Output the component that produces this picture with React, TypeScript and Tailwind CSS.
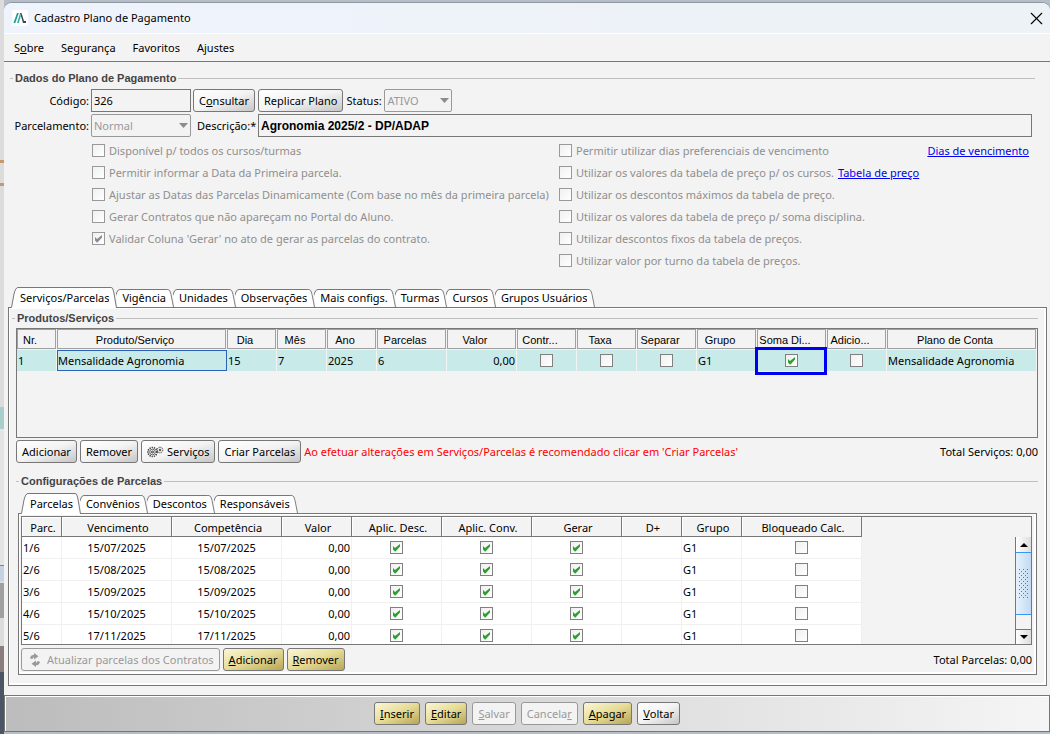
import React, { useState } from 'react';
import clsx from 'clsx';
import { X } from 'lucide-react';

interface Column {
  title: string;
  width: string;
}

const serviceColumns: Column[] = [
  { title: 'Nr.', width: 'w-[40px]' },
  { title: 'Produto/Serviço', width: 'w-[170px]' },
  { title: 'Dia', width: 'w-[50px]' },
  { title: 'Mês', width: 'w-[50px]' },
  { title: 'Ano', width: 'w-[50px]' },
  { title: 'Parcelas', width: 'w-[70px]' },
  { title: 'Valor', width: 'w-[70px]' },
  { title: 'Contr...', width: 'w-[60px]' },
  { title: 'Taxa', width: 'w-[60px]' },
  { title: 'Separar', width: 'w-[60px]' },
  { title: 'Grupo', width: 'w-[60px]' },
  { title: 'Soma Di...', width: 'w-[70px]' },
  { title: 'Adicio...', width: 'w-[60px]' },
  { title: 'Plano de Conta', width: 'w-auto' },
];

const parcelColumns: Column[] = [
  { title: 'Parc.', width: 'w-[40px]' },
  { title: 'Vencimento', width: 'w-[110px]' },
  { title: 'Competência', width: 'w-[110px]' },
  { title: 'Valor', width: 'w-[70px]' },
  { title: 'Aplic. Desc.', width: 'w-[90px]' },
  { title: 'Aplic. Conv.', width: 'w-[90px]' },
  { title: 'Gerar', width: 'w-[90px]' },
  { title: 'D+', width: 'w-[60px]' },
  { title: 'Grupo', width: 'w-[60px]' },
  { title: 'Bloqueado Calc.', width: 'w-[120px]' },
];

const parcels = [
  { nr: '1/6', date: '15/07/2025' },
  { nr: '2/6', date: '15/08/2025' },
  { nr: '3/6', date: '15/09/2025' },
  { nr: '4/6', date: '15/10/2025' },
  { nr: '5/6', date: '17/11/2025' },
];

const mainTabs = ['Serviços/Parcelas', 'Vigência', 'Unidades', 'Observações', 'Mais configs.', 'Turmas', 'Cursos', 'Grupos Usuários'];
const parcelTabs = ['Parcelas', 'Convênios', 'Descontos', 'Responsáveis'];

function Check({ checked = false, disabled = false, label, id }: { checked?: boolean; disabled?: boolean; label?: string; id?: string }) {
  return (
    <span className={clsx('grid size-[13px] shrink-0', !id && 'mx-auto')}>
      <input
        id={id}
        type="checkbox"
        aria-label={label}
        defaultChecked={checked}
        disabled={disabled}
        className="peer col-start-1 row-start-1 size-[13px] appearance-none border border-[#808080] bg-gradient-to-br from-[#f0f0f0] to-white disabled:border-[#999]"
      />
      <svg
        viewBox="0 0 13 13"
        className={clsx('pointer-events-none col-start-1 row-start-1 hidden size-[13px] peer-checked:block', disabled ? 'text-[#8c8c8c]' : 'text-[#2ca02c]')}
      >
        <path d="M3 5L5 7L10 3V5.5L5.5 10.5H4.8L3 8.5Z" fill="currentColor" />
      </svg>
    </span>
  );
}

function Option({ id, text, checked }: { id: string; text: string; checked?: boolean }) {
  return (
    <div className="flex h-[22px] items-center gap-1 pb-px text-[#8f8f8f]">
      <Check id={id} checked={checked} disabled />
      <label htmlFor={id} className="whitespace-nowrap">{text}</label>
    </div>
  );
}

function Button({ children, tone = 'gray', disabled }: { children: React.ReactNode; tone?: 'gray' | 'gold'; disabled?: boolean }) {
  return (
    <button
      type="button"
      disabled={disabled}
      className={clsx(
        'flex h-[23px] shrink-0 items-center justify-center whitespace-nowrap rounded-[3px] border px-[5px]',
        disabled && 'border-[#999] bg-[#f3f3f3] text-[#999]',
        !disabled && tone === 'gray' && 'border-[#777] bg-gradient-to-br from-white via-[#f3f3f3] to-[#c6c6c6]',
        !disabled && tone === 'gold' && 'border-[#777] bg-gradient-to-br from-[#fbf6d6] via-[#e6dc96] to-[#b8a557]'
      )}
    >
      {children}
    </button>
  );
}

function GroupTitle({ children }: { children: React.ReactNode }) {
  return (
    <div className="flex h-[14px] items-center gap-[2px]">
      <span className="h-px w-[3px] bg-[#c0c0c0]" />
      <h2 className="font-['Liberation_Sans',sans-serif] text-[11px] font-bold text-[#444]">{children}</h2>
      <span className="h-px flex-1 bg-[#c0c0c0]" />
    </div>
  );
}

function Tabs({ items }: { items: string[] }) {
  const [active, setActive] = useState(0);
  return (
    <div role="tablist" className="relative z-10 -mb-px flex h-[21px] items-end pl-[3px]">
      {items.map((item, i) => {
        const on = i === active;
        return (
          <button
            key={item}
            type="button"
            role="tab"
            aria-selected={on}
            onClick={() => setActive(i)}
            className={clsx('flex', on ? 'h-[21px]' : 'mb-px h-[18px]', i > 0 && '-ml-px')}
          >
            {i === 0 ? (
              <svg viewBox="0 0 9 21" className="h-[21px] w-[9px]">
                <path d="M0.5 20.5L3 7Q4.5 0.5 7 0.5H9V21H0.5Z" fill="#fff" />
                <path d="M0.5 20.5L3 7Q4.5 0.5 7 0.5H9" fill="none" stroke="#777" />
              </svg>
            ) : (
              <svg viewBox="0 0 6 18" className="h-[18px] w-[6px]">
                <path d="M0 6L1 3Q2 0.5 4 0.5H6V18H1.5Z" fill="#fff" />
                <path d="M-0.5 7L1 3Q2 0.5 4 0.5H6" fill="none" stroke="#777" />
              </svg>
            )}
            <span className="flex h-full items-center whitespace-nowrap border-t border-[#777] bg-white pb-px">{item}</span>
            <svg viewBox="0 0 8 20" preserveAspectRatio="none" className="h-full w-2">
              <path d="M0 0.5H2Q4 0.5 5 6L7.5 20H0Z" fill="#fff" />
              <path d="M0 0.5H2Q4 0.5 5 6L7.5 20" fill="none" stroke="#777" />
            </svg>
          </button>
        );
      })}
    </div>
  );
}

function Combo({ id, value, className }: { id: string; value: string; className: string }) {
  return (
    <span className={clsx('grid h-[23px] items-center', className)}>
      <select id={id} disabled defaultValue={value} className="col-start-1 row-start-1 h-full w-full appearance-none rounded-[2px] border border-[#999] px-[2px] text-[#999] opacity-100">
        <option>{value}</option>
      </select>
      <svg viewBox="0 0 9 5" className="pointer-events-none col-start-1 row-start-1 mr-[3px] h-[5px] w-[9px] justify-self-end">
        <path d="M0 0H9L4.5 5Z" fill="#8c8c8c" />
      </svg>
    </span>
  );
}

function Logo() {
  return (
    <svg viewBox="0 0 16 16" className="size-4 rounded-[2px] bg-white">
      <path d="M1.5 13L5 3H6.8L3.3 13Z" fill="#1a9c8c" />
      <path d="M5 13L8 3.5L8.8 6L6.8 13Z" fill="#2fae9e" />
      <path d="M8 3H9.5L12 11H14V13H11Z" fill="#3c4650" />
    </svg>
  );
}

function Gears() {
  return (
    <svg viewBox="0 0 17 12" className="mr-[3px] h-3 w-[17px]" fill="none" stroke="#333">
      <circle cx="5.5" cy="6" r="4.5" strokeWidth="1.6" strokeDasharray="1.2 1" />
      <circle cx="5.5" cy="6" r="2.8" stroke="#666" />
      <circle cx="5.5" cy="6" r="1" />
      <circle cx="13" cy="4" r="2.8" strokeDasharray="1.2 0.7" />
      <circle cx="13" cy="4" r="0.8" />
    </svg>
  );
}

function Refresh() {
  return (
    <svg viewBox="0 0 14 14" className="ml-px mr-[5px] size-[14px]" fill="#999">
      <path d="M2 4.5Q3 1.8 6 1.8V0L10.5 3.2L6 6.4V4.3Q5 4 4.5 6Q2 6 2 4.5Z" />
      <path d="M12 9.5Q11 12.2 8 12.2V14L3.5 10.8L8 7.6V9.7Q9 10 9.5 8Q12 8 12 9.5Z" />
    </svg>
  );
}

function ServicesTable() {
  return (
    <div className="h-[110px] border border-[#777]">
      <table className="w-full table-fixed border-separate border-spacing-0">
        <thead>
          <tr>
            {serviceColumns.map((col) => (
              <th key={col.title} className={clsx('h-[21px] p-0 pb-px pr-px font-normal', col.width)}>
                <div className="flex h-5 items-center justify-center overflow-hidden whitespace-nowrap border border-[#a0a0a0] pr-[13px] pt-[2px] font-['Liberation_Sans',sans-serif] text-[11px]">
                  {col.title}
                </div>
              </th>
            ))}
          </tr>
        </thead>
        <tbody>
          <tr className="h-[21px] bg-[#c8ebea] *:border-r *:border-[#f3f3f3] *:px-px *:py-0">
            <td>1</td>
            <td className="outline outline-1 -outline-offset-1 outline-[#2a62b8]">Mensalidade Agronomia</td>
            <td>15</td>
            <td>7</td>
            <td>2025</td>
            <td>6</td>
            <td className="text-right">0,00</td>
            <td><Check label="Contr..." /></td>
            <td><Check label="Taxa" /></td>
            <td><Check label="Separar" /></td>
            <td>G1</td>
            <td className="relative">
              <Check label="Soma Di..." checked />
              <span className="pointer-events-none absolute -bottom-1 -left-[2px] -right-px -top-[3px] border-3 border-[#0000f0]" />
            </td>
            <td><Check label="Adicio..." /></td>
            <td className="whitespace-nowrap">Mensalidade Agronomia</td>
          </tr>
        </tbody>
      </table>
    </div>
  );
}

function ScrollBar() {
  return (
    <div className="mt-5 flex w-4 flex-col border-l border-[#777]">
      <span className="flex h-[15px] items-center justify-center bg-gradient-to-r from-white to-[#ddd]">
        <svg viewBox="0 0 8 4" className="h-1 w-2"><path d="M0 4L4 0L8 4Z" /></svg>
      </span>
      <span className="flex h-[63px] items-center justify-center border-y border-[#3c96f0] bg-gradient-to-r from-[#e6f2fd] to-[#c2daf2]">
        <svg className="h-[30px] w-[10px]">
          <defs>
            <pattern id="grip" width="4" height="4" patternUnits="userSpaceOnUse">
              <path d="M0 0H1V1H0ZM2 2H3V3H2Z" fill="#1e86ee" />
            </pattern>
          </defs>
          <rect width="10" height="30" fill="url(#grip)" />
        </svg>
      </span>
      <span className="flex-1 border-b border-[#777]" />
      <span className="flex h-[14px] items-center justify-center bg-gradient-to-r from-white to-[#ddd]">
        <svg viewBox="0 0 8 4" className="h-1 w-2"><path d="M0 0L4 4L8 0Z" /></svg>
      </span>
    </div>
  );
}

function ParcelsTable() {
  return (
    <div className="flex h-[129px] justify-between overflow-hidden border border-[#777]">
      <table className="w-[840px] shrink-0 table-fixed border-separate border-spacing-0 self-start">
        <thead>
          <tr>
            {parcelColumns.map((col) => (
              <th key={col.title} className={clsx('h-5 border-b border-r border-[#777] p-0 pl-[3px] pt-[2px] font-normal shadow-[inset_1px_1px_0_#fff]', col.width)}>
                {col.title}
              </th>
            ))}
          </tr>
        </thead>
        <tbody>
          {parcels.map((p) => (
            <tr key={p.nr} className="h-[22px] bg-white *:border-b *:border-r *:border-[#f0f0f0] *:px-px *:py-0">
              <td>{p.nr}</td>
              <td className="text-center">{p.date}</td>
              <td className="text-center">{p.date}</td>
              <td className="text-right">0,00</td>
              <td><Check label={`Aplic. Desc. ${p.nr}`} checked /></td>
              <td><Check label={`Aplic. Conv. ${p.nr}`} checked /></td>
              <td><Check label={`Gerar ${p.nr}`} checked /></td>
              <td />
              <td>G1</td>
              <td><Check label={`Bloqueado Calc. ${p.nr}`} /></td>
            </tr>
          ))}
        </tbody>
      </table>
      <ScrollBar />
    </div>
  );
}

export default function App() {
  return (
    <div className="flex min-h-screen bg-[#b4bdc8] font-['Noto_Sans','Open_Sans',sans-serif] text-[11px] leading-4 text-black">
      {/* edge of the window behind the dialog */}
      <div className="flex w-1 shrink-0 flex-col bg-[#dcdcdc]">
        <span className="h-[163px] border-b-3 border-[#c49a6c]" />
        <span className="h-[23px] border-b-3 border-[#c49a6c]" />
        <span className="h-[221px]" />
        <span className="h-[22px] bg-[#a9cfcd]" />
        <span className="h-[136px] bg-[#e4e4e4]" />
        <span className="h-[16px] border-t border-[#4a8fd8] bg-[#c4d2e4]" />
        <span className="h-[2px]" />
        <span className="h-[35px] bg-[#a0a0a0]" />
        <span className="flex-1" />
        <span className="h-[26px] bg-[#8a7d7d]" />
        <span className="h-[62px] bg-[#4a5666]" />
      </div>

      <div className="flex min-w-0 flex-1 flex-col pb-[2px] pt-[2px]">
        <div className="flex flex-1 flex-col rounded-t-lg border-t border-[#8f979f] bg-[#f3f3f3]">
          <header className="flex h-[31px] items-center gap-[6px] rounded-t-lg border-b border-white bg-gradient-to-r from-[#eff3fc] to-[#edf2f6] pl-2 pr-[3px]">
            <Logo />
            <h1 className="flex-1">Cadastro Plano de Pagamento</h1>
            <button type="button" aria-label="Fechar"><X size={21} strokeWidth={1.3} /></button>
          </header>

          <nav className="flex h-7 items-center gap-[17px] border-b border-[#777] px-[10px]">
            <button type="button">S<u>o</u>bre</button>
            <button type="button">Segurança</button>
            <button type="button">Favoritos</button>
            <button type="button">Ajustes</button>
          </nav>

          <main className="flex flex-col pl-1 pr-[3px] pt-[9px]">
            <section className="pl-[2px] pr-3">
              <GroupTitle>Dados do Plano de Pagamento</GroupTitle>
              <div className="mt-1 flex items-center gap-[2px] pl-[3px]">
                <label htmlFor="codigo" className="w-[76px] text-right">Código:</label>
                <input id="codigo" defaultValue="326" className="h-[23px] w-[100px] border border-[#777] px-[2px]" />
                <div className="flex items-center gap-[3px]">
                  <Button>C<u>o</u>nsultar</Button>
                  <Button>Replicar Plano</Button>
                  <label htmlFor="status" className="w-[35px] whitespace-nowrap">Status:</label>
                  <Combo id="status" value="ATIVO" className="w-[68px]" />
                </div>
              </div>
              <div className="mt-[2px] flex items-center gap-[2px] pl-[3px] pr-[3px]">
                <label htmlFor="parcelamento" className="flex w-[76px] justify-end">Parcelamento:</label>
                <Combo id="parcelamento" value="Normal" className="w-[100px]" />
                <label htmlFor="descricao" className="ml-1 w-[59px] whitespace-nowrap">Descrição:*</label>
                <input
                  id="descricao"
                  defaultValue="Agronomia 2025/2 - DP/ADAP"
                  className="h-[23px] min-w-0 flex-1 border border-[#777] px-[2px] font-['Liberation_Sans',sans-serif] text-[12px] font-bold"
                />
              </div>

              <div className="mt-[3px] flex pl-[82px] pr-[6px]">
                <div className="w-[467px] shrink-0">
                  <Option id="op1" text="Disponível p/ todos os cursos/turmas" />
                  <Option id="op2" text="Permitir informar a Data da Primeira parcela." />
                  <Option id="op3" text="Ajustar as Datas das Parcelas Dinamicamente (Com base no mês da primeira parcela)" />
                  <Option id="op4" text="Gerar Contratos que não apareçam no Portal do Aluno." />
                  <Option id="op5" text="Validar Coluna 'Gerar' no ato de gerar as parcelas do contrato." checked />
                </div>
                <div className="flex-1">
                  <div className="flex items-center justify-between">
                    <Option id="op6" text="Permitir utilizar dias preferenciais de vencimento" />
                    <a href="#dias" className="text-[#0000ee] underline">Dias de vencimento</a>
                  </div>
                  <div className="flex items-center gap-1">
                    <Option id="op7" text="Utilizar os valores da tabela de preço p/ os cursos." />
                    <a href="#tabela" className="text-[#0000ee] underline">Tabela de preço</a>
                  </div>
                  <Option id="op8" text="Utilizar os descontos máximos da tabela de preço." />
                  <Option id="op9" text="Utilizar os valores da tabela de preço p/ soma disciplina." />
                  <Option id="op10" text="Utilizar descontos fixos da tabela de preços." />
                  <Option id="op11" text="Utilizar valor por turno da tabela de preços." />
                </div>
              </div>
            </section>

            <div className="mt-[15px]">
              <Tabs items={mainTabs} />
              <section className="border border-[#777] pb-[10px] pl-[3px] pr-2 pt-[3px] shadow-[inset_1px_1px_0_#fff,inset_-2px_-2px_0_#fff]">
                <GroupTitle>Produtos/Serviços</GroupTitle>
                <div className="mt-[3px] pl-1">
                  <ServicesTable />
                  <div className="mt-[2px] flex items-center gap-[3px]">
                    <Button>Adicionar</Button>
                    <Button>Remover</Button>
                    <Button><Gears />Serviços</Button>
                    <Button>Criar Parcelas</Button>
                    <p className="flex-1 whitespace-nowrap text-[#f00]">Ao efetuar alterações em Serviços/Parcelas é recomendado clicar em 'Criar Parcelas'</p>
                    <p>Total Serviços: 0,00</p>
                  </div>
                </div>

                <div className="mt-[11px] pl-1">
                  <GroupTitle>Configurações de Parcelas</GroupTitle>
                  <div className="mt-[5px] pl-[2px] pr-px">
                    <Tabs items={parcelTabs} />
                    <section className="border border-[#777] px-[2px] pb-[3px] pt-[2px] pr-[4px] shadow-[inset_1px_1px_0_#fff,inset_-2px_-2px_0_#fff]">
                      <ParcelsTable />
                      <div className="mt-[3px] flex items-center gap-[3px]">
                        <Button disabled><Refresh />Atualizar parcelas dos Contratos</Button>
                        <Button tone="gold"><u>A</u>dicionar</Button>
                        <Button tone="gold"><u>R</u>emover</Button>
                        <p className="flex-1 text-right">Total Parcelas: 0,00</p>
                      </div>
                    </section>
                  </div>
                </div>
              </section>
            </div>
          </main>

          <footer className="mt-auto flex h-[37px] items-center justify-center gap-[5px] border border-[#777] bg-gradient-to-r from-[#bcbcbc] to-[#f5f5f5] shadow-[inset_1px_1px_0_#fff]">
            <Button tone="gold"><u>I</u>nserir</Button>
            <Button tone="gold"><u>E</u>ditar</Button>
            <Button disabled><u>S</u>alvar</Button>
            <Button disabled>Cancela<u>r</u></Button>
            <Button tone="gold"><u>A</u>pagar</Button>
            <Button><u>V</u>oltar</Button>
          </footer>
        </div>
      </div>
    </div>
  );
}
